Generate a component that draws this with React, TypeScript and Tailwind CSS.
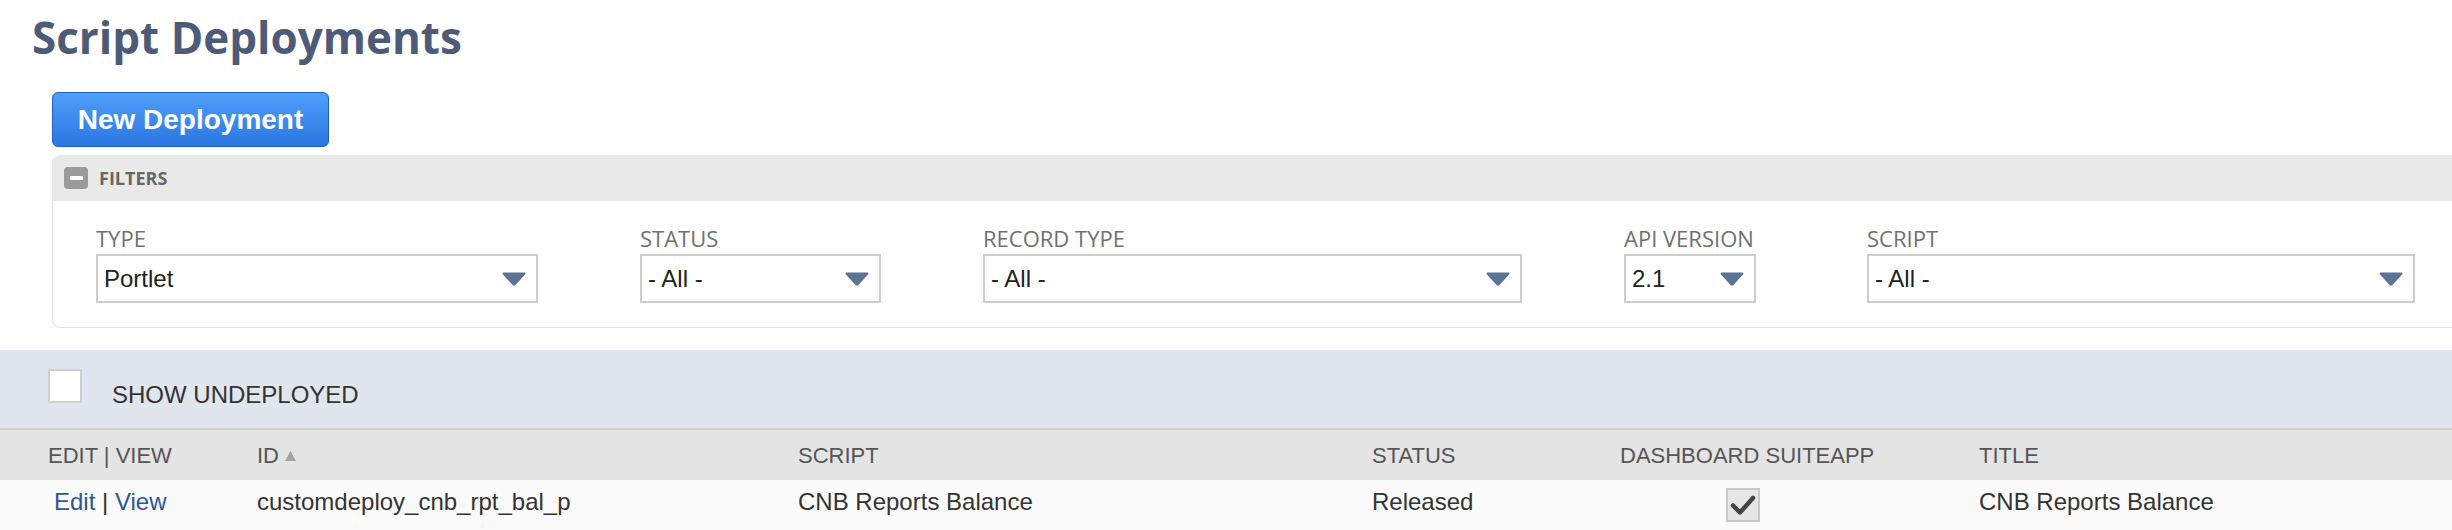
import React from "react";

const OPEN = { fontFamily: '"Open Sans", "Noto Sans", sans-serif' };
const ARIAL = { fontFamily: '"Liberation Sans", Arial, sans-serif' };

type Filter = { label: string; value: string; col: string; box: string };

const filters: Filter[] = [
  { label: "TYPE", value: "Portlet", col: "w-[442px]", box: "w-[442px]" },
  { label: "STATUS", value: "- All -", col: "w-[241px]", box: "w-[241px]" },
  { label: "RECORD TYPE", value: "- All -", col: "w-[539px]", box: "w-[539px]" },
  { label: "API VERSION", value: "2.1", col: "w-[141px]", box: "w-[132px]" },
  { label: "SCRIPT", value: "- All -", col: "w-[548px]", box: "w-[548px]" },
];

function Arrow() {
  return (
    <svg width="24" height="14" viewBox="0 0 24 14" className="shrink-0">
      <path d="M1 0.5 H23 L23.5 2 L13 13.5 H11 L0.5 2 Z" fill="#5b7496" />
    </svg>
  );
}

function FilterField({ f }: { f: Filter }) {
  return (
    <div className={`${f.col} shrink-0 flex flex-col`}>
      <div className="text-[22px] leading-[22px] font-normal text-[#707070] whitespace-nowrap" style={OPEN}>
        {f.label}
      </div>
      <div
        className={`${f.box} mt-[5px] h-[49px] border-2 border-[#cdcdcd] bg-white flex items-center justify-between pl-[6px] pr-[10px]`}
      >
        <span className="text-[24px] text-[#222]" style={ARIAL}>
          {f.value}
        </span>
        <Arrow />
      </div>
    </div>
  );
}

export default function App() {
  return (
    <div className="w-[2452px] h-[530px] bg-white overflow-hidden">
      {/* Title */}
      <h1 className="pl-[32px] pt-[15px] text-[44px] leading-[44px] font-bold text-[#4d5b78]" style={OPEN}>
        Script Deployments
      </h1>

      {/* New button */}
      <div className="ml-[52px] mt-[33px] w-[277px] h-[55px] rounded-[6px] border-[1.5px] border-[#1f60c6] bg-gradient-to-b from-[#4f9ff9] to-[#2a76e2] flex items-center justify-center">
        <span className="text-white text-[28px] font-bold" style={ARIAL}>
          New Deployment
        </span>
      </div>

      {/* Filters panel */}
      <div className="ml-[52px] mt-[8px] w-[2440px]">
        <div className="h-[46px] bg-[#e9e9e9] rounded-t-[8px] flex items-center pl-[12px]">
          <div className="w-[24px] h-[22px] rounded-[4px] bg-[#9a9a9a] flex items-center justify-center">
            <div className="w-[13px] h-[4px] bg-white rounded-[1px]" />
          </div>
          <span className="ml-[11px] text-[18px] font-bold text-[#666]" style={OPEN}>
            FILTERS
          </span>
        </div>
        <div className="h-[127px] bg-white border border-t-0 border-[#e2e2e2] rounded-b-[8px] pt-[26px] pl-[43px] flex gap-[102px]">
          {filters.map((f) => (
            <FilterField key={f.label} f={f} />
          ))}
        </div>
      </div>

      {/* Show undeployed band */}
      <div className="mt-[22px] h-[80px] bg-[#e1e5ee] border-b-2 border-[#cbcfd6] flex items-start pl-[48px]">
        <div className="mt-[19px] w-[34px] h-[34px] bg-white border-2 border-[#d0d0d0]" />
        <span className="ml-[30px] mt-[33px] text-[24px] leading-[24px] text-[#333]" style={ARIAL}>
          SHOW UNDEPLOYED
        </span>
      </div>

      {/* Table header */}
      <div
        className="h-[50px] bg-[#e4e4e4] grid grid-cols-[209px_541px_574px_248px_359px_1fr] items-center pl-[48px] text-[22px] text-[#555]"
        style={ARIAL}
      >
        <div>EDIT | VIEW</div>
        <div className="flex items-center">
          ID
          <svg width="11" height="10" viewBox="0 0 11 10" className="ml-[6px] mt-[2px]">
            <path d="M5.5 0 L11 10 H0 Z" fill="#a3a3a3" />
          </svg>
        </div>
        <div>SCRIPT</div>
        <div>STATUS</div>
        <div>DASHBOARD SUITEAPP</div>
        <div>TITLE</div>
      </div>

      {/* Data row */}
      <div
        className="h-[50px] bg-[#fafafa] grid grid-cols-[209px_541px_574px_248px_359px_1fr] items-start pt-[8px] pl-[48px] text-[24px] leading-[24px] text-[#333]"
        style={ARIAL}
      >
        <div className="pl-[6px] mt-[2px]">
          <span className="text-[#2b5797]">Edit</span> | <span className="text-[#2b5797]">View</span>
        </div>
        <div className="mt-[2px]">customdeploy_cnb_rpt_bal_p</div>
        <div className="mt-[2px]">CNB Reports Balance</div>
        <div className="mt-[2px]">Released</div>
        <div>
          <div className="ml-[106px] w-[34px] h-[34px] bg-[#e6e6e6] border-2 border-[#c8c8c8] flex items-center justify-center">
            <svg width="26" height="22" viewBox="0 0 26 22">
              <path
                d="M3 11.5 L10 18.5 L23 4"
                fill="none"
                stroke="#454545"
                strokeWidth="4.5"
                strokeLinecap="round"
                strokeLinejoin="round"
              />
            </svg>
          </div>
        </div>
        <div className="mt-[2px]">CNB Reports Balance</div>
      </div>
    </div>
  );
}
